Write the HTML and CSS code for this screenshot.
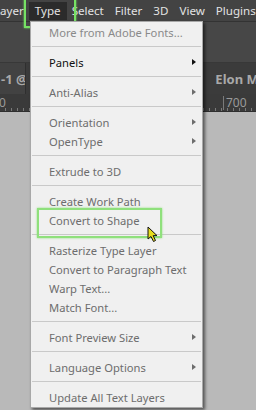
FILE: index.html
```html
<!DOCTYPE html>
<html lang="en">
  <head>
    <meta charset="UTF-8" />
    <title>Type menu</title>
    <link rel="stylesheet" href="styles.css">
  </head>
  <body>
    <div class="app">
      <div class="menubar">
        <span class="mb-item first">Layer</span>
        <span class="mb-item active">Type</span>
        <span class="mb-item">Select</span>
        <span class="mb-item">Filter</span>
        <span class="mb-item">3D</span>
        <span class="mb-item">View</span>
        <span class="mb-item">Plugins</span>
      </div>
      <div class="optionsbar"></div>
      <div class="tabs">
        <div class="tab tab-one"><span>-1 @</span></div>
        <div class="tab tab-two"><span>Elon M</span></div>
      </div>
      <div class="ruler">
        <span class="r-label r-zero">0</span>
        <span class="r-label r-seven">700</span>
      </div>
      <div class="canvas"></div>

      <!-- the open Type menu -->
      <ul class="menu">
        <li class="item muted">More from Adobe Fonts...</li>
        <li class="sep"></li>
        <li class="item enabled sub">Panels</li>
        <li class="sep"></li>
        <li class="item sub">Anti-Alias</li>
        <li class="sep"></li>
        <li class="item sub">Orientation</li>
        <li class="item sub">OpenType</li>
        <li class="sep"></li>
        <li class="item">Extrude to 3D</li>
        <li class="sep"></li>
        <li class="item">Create Work Path</li>
        <li class="item marked">Convert to Shape
          <svg class="cursor" width="13" height="17" viewBox="0 0 13 17">
            <path d="M1 1 L1 13 L4 10.5 L6.5 15.5 L8.5 14.5 L6.2 9.6 L10 9.6 Z" fill="#e6dc1e" stroke="#111" stroke-width="1" stroke-linejoin="round"/>
          </svg>
        </li>
        <li class="sep"></li>
        <li class="item">Rasterize Type Layer</li>
        <li class="item">Convert to Paragraph Text</li>
        <li class="item">Warp Text...</li>
        <li class="item">Match Font...</li>
        <li class="sep"></li>
        <li class="item sub">Font Preview Size</li>
        <li class="sep"></li>
        <li class="item sub">Language Options</li>
        <li class="sep"></li>
        <li class="item">Update All Text Layers</li>
      </ul>
    </div>
  </body>
</html>
```

FILE: styles.css
```css
* {
  margin: 0;
  padding: 0;
  box-sizing: border-box;
}

body {
  width: 256px;
  height: 410px;
  overflow: hidden;
  background-color: #b9b9b9;
  font-family: "Segoe UI", "Noto Sans", "Open Sans", sans-serif;
}

.app {
  position: relative;
  display: flex;
  flex-direction: column;
  height: 410px;
}

.menubar {
  height: 22px;
  background-color: #434343;
  border-bottom: 1px solid #333;
  display: flex;
  align-items: center;
  gap: 11px;
  color: #e2e2e2;
  font-size: 11.6px;
  white-space: nowrap;
}

.mb-item.first {
  margin-left: -6px;
}

.mb-item.active {
  position: relative;
  background-color: #2b2b2b;
  padding: 0 6px;
  margin: 0 -6px;
  line-height: 18px;
}

.mb-item.active::after {
  content: "";
  position: absolute;
  left: -5px;
  top: -4px;
  width: 48px;
  height: 26px;
  border: 2px solid #76e264;
  box-shadow: 0 0 2px #76e264;
}

.optionsbar {
  height: 41px;
  background-color: #474747;
  border-bottom: 1px solid #383838;
}

.tabs {
  height: 31px;
  background-color: #3b3b3b;
  display: flex;
  color: #a9a9a9;
  font-size: 13px;
  font-weight: 700;
  white-space: nowrap;
}

.tab {
  display: flex;
  align-items: center;
  overflow: hidden;
}

.tab-one {
  width: 28px;
  background-color: #424242;
  border-right: 1px solid #2f2f2f;
  padding-left: 1px;
}

.tab-two {
  margin-left: 189px;
  padding-left: 0;
}

.ruler {
  position: relative;
  height: 18px;
  background-color: #3a3a3a;
  background-image: repeating-linear-gradient(to right, transparent 0 5px, #7a7a7a 5px 6px);
  background-size: 100% 3px;
  background-repeat: no-repeat;
  background-position: 0 bottom;
  color: #9a9a9a;
  font-size: 12px;
  border-bottom: 1px solid #2e2e2e;
}

.r-label {
  position: absolute;
  top: 2px;
  padding-left: 2px;
  border-left: 1px solid #7a7a7a;
  line-height: 14px;
}

.r-zero {
  left: -4px;
}

.r-seven {
  left: 223px;
}

.canvas {
  flex: 1;
  background-color: #b9b9b9;
}

.menu {
  position: absolute;
  left: 30px;
  top: 21px;
  width: 173px;
  list-style: none;
  background-color: #f0f0f0;
  border: 1px solid #a8a8a8;
  padding-top: 1px;
  box-shadow: 2px 2px 3px rgba(0, 0, 0, 0.55);
  font-size: 11.2px;
  color: #6d6d6d;
}

.item {
  position: relative;
  height: 19px;
  line-height: 19px;
  padding-left: 18px;
  white-space: nowrap;
}

.item.muted {
  color: #8a8a8a;
}

.item.enabled {
  color: #111;
}

.sub::after {
  content: "";
  position: absolute;
  right: 6px;
  top: 6px;
  border-left: 4px solid #6d6d6d;
  border-top: 3.5px solid transparent;
  border-bottom: 3.5px solid transparent;
}

.enabled.sub::after {
  border-left-color: #111;
}

.sep {
  height: 1px;
  margin: 4px 1px 6px 1px;
  background-color: #c9c9c9;
}

.marked::before {
  content: "";
  position: absolute;
  left: 6px;
  top: -3px;
  width: 121px;
  height: 26px;
  border: 2px solid #8fe07c;
  box-shadow: 0 0 2px #8fe07c;
}

.cursor {
  position: absolute;
  left: 116px;
  top: 15px;
}
```
